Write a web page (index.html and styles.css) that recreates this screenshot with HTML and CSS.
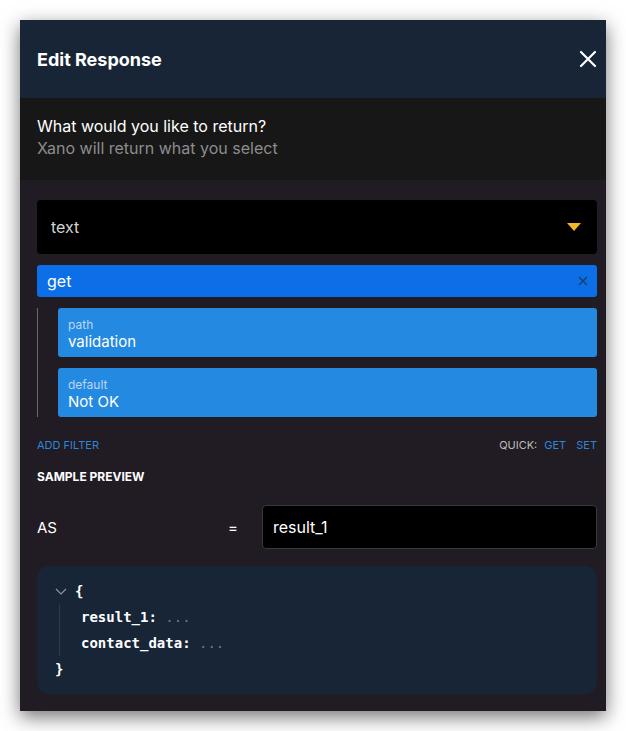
FILE: index.html
```html
<!DOCTYPE html>
<html lang="en">
<head>
    <meta charset="UTF-8">
    <meta name="viewport" content="width=device-width, initial-scale=1.0">
    <title>Edit Response</title>
    <link rel="stylesheet" href="styles.css">
</head>
<body>
    <div class="modal">
        <div class="modal-header">
            <h1>Edit Response</h1>
            <button class="close" aria-label="Close">
                <svg width="18" height="18" viewBox="0 0 18 18"><path d="M2 2L16 16M16 2L2 16" stroke="#fff" stroke-width="2.2" stroke-linecap="round"/></svg>
            </button>
        </div>
        <div class="intro">
            <p class="question">What would you like to return?</p>
            <p class="hint">Xano will return what you select</p>
        </div>
        <div class="modal-body">
            <div class="select">
                <span>text</span>
                <svg width="14" height="8" viewBox="0 0 14 8"><path d="M0 0H14L7 8Z" fill="#f3b626"/></svg>
            </div>
            <div class="filter">
                <span>get</span>
                <svg width="10" height="10" viewBox="0 0 10 10"><path d="M1 1L9 9M9 1L1 9" stroke="#1c3f6a" stroke-width="1.4"/></svg>
            </div>
            <div class="args">
                <div class="arg">
                    <div class="arg-label">path</div>
                    <div class="arg-value">validation</div>
                </div>
                <div class="arg">
                    <div class="arg-label">default</div>
                    <div class="arg-value">Not OK</div>
                </div>
            </div>
            <div class="filter-actions">
                <a href="#" class="link">ADD FILTER</a>
                <div class="quick">
                    <span>QUICK:</span>
                    <a href="#" class="link">GET</a>
                    <a href="#" class="link">SET</a>
                </div>
            </div>
            <h2 class="section-title">SAMPLE PREVIEW</h2>
            <div class="as-row">
                <span class="as-label">AS</span>
                <span class="eq">=</span>
                <div class="as-input">result_1</div>
            </div>
            <div class="code">
                <div class="code-open">
                    <svg class="chevron" width="12" height="8" viewBox="0 0 12 8"><path d="M1 1L6 6L11 1" stroke="#8b97a6" stroke-width="1.2" fill="none"/></svg>
                    <span>{</span>
                </div>
                <div class="code-children">
                    <div class="code-line"><span class="key">result_1:</span> <span class="dots">...</span></div>
                    <div class="code-line"><span class="key">contact_data:</span> <span class="dots">...</span></div>
                </div>
                <div class="code-line">}</div>
            </div>
        </div>
    </div>
</body>
</html>
```

FILE: styles.css
```css
* { box-sizing: border-box; }
body { margin: 0; background: #fff; font-family: Inter, "Noto Sans", sans-serif; }
.modal { margin: 20px; width: 586px; box-shadow: 0 6px 18px rgba(0,0,0,0.55); }

.modal-header { height: 78px; background: #182536; display: flex; align-items: center; justify-content: space-between; padding: 0 9px 0 17px; }
.modal-header h1 { margin: 0; color: #fff; font-size: 18px; font-weight: 700; }
.close { background: none; border: 0; padding: 0; width: 18px; height: 18px; display: flex; }

.intro { background: #171717; padding: 17px 17px 21px; }
.intro p { margin: 0; font-size: 16px; line-height: 22px; }
.question { color: #fff; }
.hint { color: #8d8d8d; }

.modal-body { background: #211b24; padding: 20px 9px 17px 17px; }

.select { height: 54px; background: #000; border-radius: 4px; display: flex; align-items: center; justify-content: space-between; padding: 0 16px 0 14px; color: #d2d2d2; font-size: 16px; }
.filter { margin-top: 11px; height: 32px; background: #0d6fe7; border-radius: 3px; display: flex; align-items: center; justify-content: space-between; padding: 0 9px 0 10px; color: #fff; font-size: 16px; }

.args { margin-top: 11px; border-left: 1px solid #6a6470; padding-left: 20px; display: flex; flex-direction: column; gap: 11px; }
.arg { height: 49px; background: #2489e0; border-radius: 3px; padding: 2px 10px 0; display: flex; flex-direction: column; justify-content: center; }
.arg-label { color: #bcd6f2; font-size: 12px; line-height: 15px; }
.arg-value { color: #fff; font-size: 15px; line-height: 19px; }

.filter-actions { margin-top: 21px; display: flex; justify-content: space-between; align-items: center; font-size: 11px; }
.link { color: #2f86d8; text-decoration: none; }
.quick { color: #bdbdbd; display: flex; gap: 10px; }
.quick span { margin-right: -3px; }

.section-title { margin: 17px 0 0; color: #fff; font-size: 12px; font-weight: 700; line-height: 16px; }

.as-row { margin-top: 20px; display: flex; align-items: center; color: #fff; font-size: 15px; }
.as-label { width: 191px; }
.eq { width: 34px; }
.as-input { flex: 1; height: 44px; background: #000; border: 1px solid #3a3a3a; border-radius: 4px; display: flex; align-items: center; padding: 0 10px; font-size: 16px; }

.code { margin-top: 17px; background: #172536; border-radius: 12px; padding: 12px 18px; font-family: "DejaVu Sans Mono", monospace; font-size: 14px; font-weight: 700; color: #fff; }
.code-open { line-height: 26px; display: flex; align-items: center; gap: 8px; }
.code-line { line-height: 26px; white-space: pre; }
.chevron { margin-top: 1px; }
.code-children { margin-left: 4px; border-left: 1px solid #2b3b4e; padding-left: 21px; }
.dots { color: #6b7786; font-weight: 400; }
```
